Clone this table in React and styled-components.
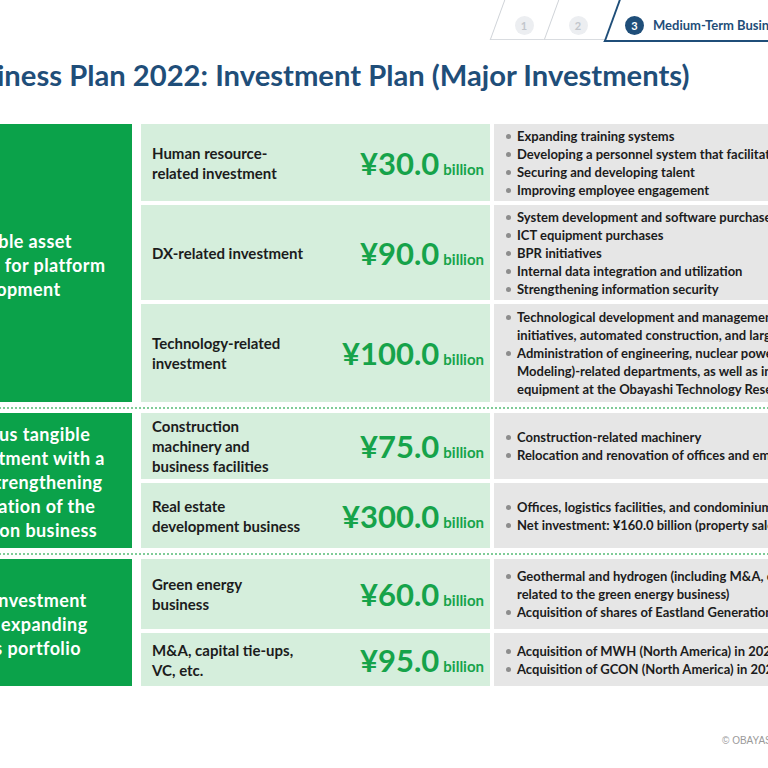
import React from 'react'
import styled, { createGlobalStyle } from 'styled-components'

const GlobalStyle = createGlobalStyle`
    html, body {
        margin: 0;
        padding: 0;
        background: #ffffff;
        overflow: hidden;
    }
    body {
        font-family: "Lato", "Open Sans", sans-serif;
    }
`

const groups = [
    {
        label: ['Intangible asset', 'investment for platform', 'development'],
        rows: [
            {
                h: 77,
                name: ['Human resource-', 'related investment'],
                amount: '¥30.0',
                items: [
                    ['Expanding training systems'],
                    ['Developing a personnel system that facilitates diverse work styles'],
                    ['Securing and developing talent'],
                    ['Improving employee engagement'],
                ],
            },
            {
                h: 95,
                name: ['DX-related investment'],
                amount: '¥90.0',
                items: [
                    ['System development and software purchases'],
                    ['ICT equipment purchases'],
                    ['BPR initiatives'],
                    ['Internal data integration and utilization'],
                    ['Strengthening information security'],
                ],
            },
            {
                h: 98,
                name: ['Technology-related', 'investment'],
                amount: '¥100.0',
                items: [
                    ['Technological development and management of R&D, DX', 'initiatives, automated construction, and large-scale projects'],
                    ['Administration of engineering, nuclear power, and BIM (Building Information', 'Modeling)-related departments, as well as investment in research', 'equipment at the Obayashi Technology Research Institute'],
                ],
            },
        ],
    },
    {
        label: ['Continuous tangible', 'asset investment with a', 'aimed at strengthening', 'the foundation of the', 'construction business'],
        rows: [
            {
                h: 66,
                name: ['Construction', 'machinery and', 'business facilities'],
                amount: '¥75.0',
                items: [
                    ['Construction-related machinery'],
                    ['Relocation and renovation of offices and employee housing'],
                ],
            },
            {
                h: 65,
                name: ['Real estate', 'development business'],
                amount: '¥300.0',
                items: [
                    ['Offices, logistics facilities, and condominiums'],
                    ['Net investment: ¥160.0 billion (property sales: ¥140.0 billion)'],
                ],
            },
        ],
    },
    {
        label: ['Growth investment', 'aimed at expanding', 'business portfolio'],
        rows: [
            {
                h: 70,
                name: ['Green energy', 'business'],
                amount: '¥60.0',
                items: [
                    ['Geothermal and hydrogen (including M&A, capital tie-ups, etc.', 'related to the green energy business)'],
                    ['Acquisition of shares of Eastland Generation (New Zealand)'],
                ],
            },
            {
                h: 53,
                name: ['M&A, capital tie-ups,', 'VC, etc.'],
                amount: '¥95.0',
                items: [
                    ['Acquisition of MWH (North America) in 2023'],
                    ['Acquisition of GCON (North America) in 2025'],
                ],
            },
        ],
    },
]

function Lines({ lines }) {
    return lines.map((l, i) => (
        <React.Fragment key={i}>
            {i > 0 && <br />}
            {l}
        </React.Fragment>
    ))
}

function App() {
    return (
        <Page>
            <GlobalStyle />
            <TabBar>
                <Tab w={54}>
                    <Step>1</Step>
                </Tab>
                <Tab w={62} shift={8}>
                    <Step>2</Step>
                </Tab>
                <ActiveTab>
                    <Step active>3</Step>
                    <TabText>Medium-Term Business Plan 2022</TabText>
                </ActiveTab>
            </TabBar>

            <Title>Medium-Term Business Plan 2022: Investment Plan (Major Investments)</Title>

            <Table>
                {groups.map((g, gi) => (
                    <React.Fragment key={gi}>
                        {gi > 0 && <Separator />}
                        <Group>
                            <GroupLabel>
                                <span><Lines lines={g.label} /></span>
                            </GroupLabel>
                            <Rows>
                                {g.rows.map((r, ri) => (
                                    <Row key={ri} h={r.h}>
                                        <Amount>
                                            <Name><Lines lines={r.name} /></Name>
                                            <Value>
                                                <Num>{r.amount}</Num>
                                                <Unit>billion</Unit>
                                            </Value>
                                        </Amount>
                                        <Details>
                                            {r.items.map((it, ii) => (
                                                <Bullet key={ii}><Lines lines={it} /></Bullet>
                                            ))}
                                        </Details>
                                    </Row>
                                ))}
                            </Rows>
                        </Group>
                    </React.Fragment>
                ))}
            </Table>

            <Footer>© OBAYASHI CORPORATION</Footer>
        </Page>
    )
}

export default App


const Page = styled.div`
    width: 768px;
    height: 768px;
    overflow: hidden;
    position: relative;
`

const TabBar = styled.div`
    display: flex;
    height: 40px;
    margin-left: 497px;
    width: 500px;
`

const Tab = styled.div`
    position: relative;
    width: ${p => p.w}px;
    display: flex;
    align-items: center;
    justify-content: center;
    padding-top: 10px;
    padding-right: ${p => p.shift || 0}px;
    box-sizing: border-box;

    &::before {
        content: '';
        position: absolute;
        inset: 0;
        border-left: 1px solid #cfd3d8;
        border-bottom: 1px solid #d9dce0;
        transform: skewX(-20deg);
    }
`

const ActiveTab = styled.div`
    position: relative;
    flex: 1;
    display: flex;
    align-items: center;
    gap: 9px;
    padding-left: 12px;
    padding-top: 10px;

    &::before {
        content: '';
        position: absolute;
        top: -10px;
        left: 0;
        right: 0;
        bottom: -2px;
        border-left: 2px solid #1f4e79;
        border-bottom: 2px solid #1f4e79;
        transform: skewX(-20deg);
    }
`

const Step = styled.span`
    position: relative;
    width: 19px;
    height: 19px;
    border-radius: 50%;
    background: ${p => (p.active ? '#1f4e79' : '#eceef1')};
    color: ${p => (p.active ? '#ffffff' : '#c2c6cc')};
    font-size: 11px;
    font-weight: 700;
    display: flex;
    align-items: center;
    justify-content: center;
`

const TabText = styled.span`
    position: relative;
    font-size: 13px;
    font-weight: 700;
    color: #1f4e79;
    white-space: nowrap;
`

const Title = styled.h1`
    margin: 18px 0 0 -240px;
    font-size: 29.2px;
    line-height: 34px;
    font-weight: 700;
    color: #1f4e79;
    white-space: nowrap;
`

const Table = styled.div`
    margin: 32px 0 0 -120px;
    width: 1040px;
`

const Separator = styled.div`
    height: 11px;
    display: flex;
    align-items: center;

    &::before {
        content: '';
        flex: 1;
        border-top: 2px dotted #7fcc98;
    }
`

const Group = styled.div`
    display: grid;
    grid-template-columns: 252px 1fr;
    column-gap: 9px;
`

const GroupLabel = styled.div`
    background: #0ba24a;
    color: #ffffff;
    font-size: 18px;
    font-weight: 700;
    line-height: 24px;
    letter-spacing: 0.4px;
    text-align: center;
    display: flex;
    align-items: center;
    justify-content: center;
    white-space: nowrap;
    padding-top: 3px;
`

const Rows = styled.div`
    display: flex;
    flex-direction: column;
    gap: 4px;
`

const Row = styled.div`
    display: grid;
    grid-template-columns: 349px 1fr;
    column-gap: 4px;
    height: ${p => p.h}px;
`

const Amount = styled.div`
    background: #d5eedc;
    display: flex;
    align-items: center;
    justify-content: space-between;
    padding: 0 6px 0 11px;
`

const Name = styled.div`
    font-size: 15px;
    font-weight: 700;
    line-height: 20px;
    color: #1c1c1c;
`

const Value = styled.div`
    color: #16a34a;
    font-weight: 700;
    white-space: nowrap;
    display: flex;
    align-items: baseline;
`

const Num = styled.span`
    font-size: 31px;
`

const Unit = styled.span`
    font-size: 15px;
    margin-left: 4px;
`

const Details = styled.div`
    background: #e6e6e6;
    display: flex;
    flex-direction: column;
    justify-content: center;
    padding-left: 12px;
`

const Bullet = styled.div`
    position: relative;
    padding-left: 11px;
    font-size: 13px;
    font-weight: 700;
    line-height: 18px;
    color: #1c1c1c;
    white-space: nowrap;

    &::before {
        content: '';
        position: absolute;
        left: 0;
        top: 7px;
        width: 5px;
        height: 5px;
        border-radius: 50%;
        background: #8d8d8d;
    }
`

const Footer = styled.div`
    margin-top: 49px;
    padding-left: 722px;
    font-size: 10px;
    color: #9a9a9a;
    white-space: nowrap;
    font-family: "Liberation Sans", sans-serif;
`
